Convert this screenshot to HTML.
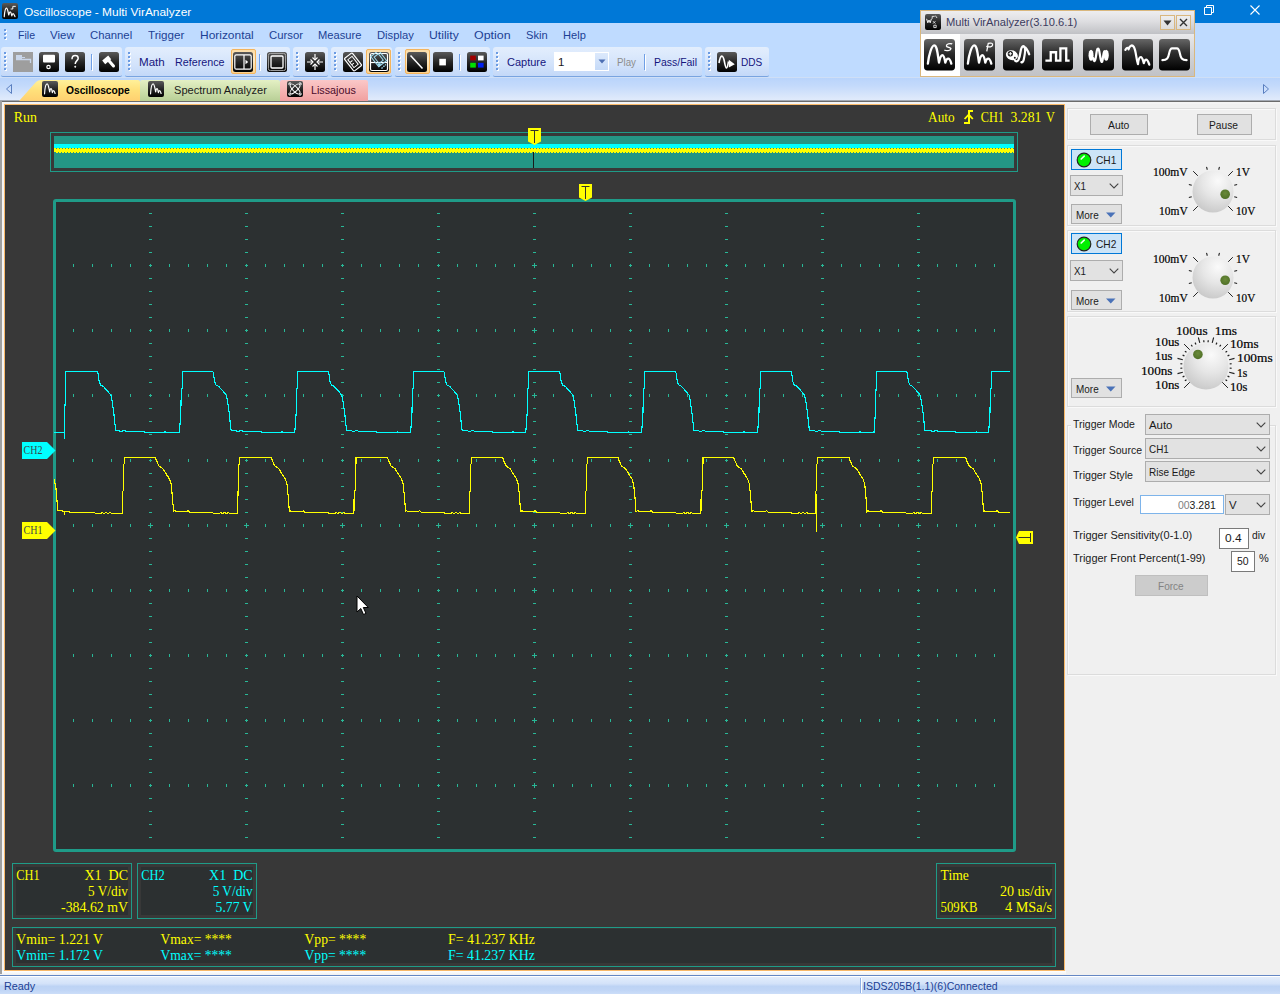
<!DOCTYPE html><html><head><meta charset="utf-8"><title>Oscilloscope - Multi VirAnalyzer</title><style>

html,body{margin:0;padding:0}
body{width:1280px;height:994px;position:relative;overflow:hidden;background:#f0f0f0;font-family:"Liberation Sans",sans-serif}
div,span.t,svg{position:absolute}
span.t{white-space:pre;display:block}
span.sf{font-family:"Liberation Serif",serif}
.tbp{background:linear-gradient(#e3eefd,#d3e3fb 60%,#c3d8f8);border-radius:3px 3px 2px 2px;border-bottom:1px solid #79a4e0;box-sizing:border-box}
.chk{background:linear-gradient(#fbdba5,#fdebc8 40%,#fbd28f);border:1px solid #f4b45c;border-radius:2px;box-sizing:border-box}
.cb{background:#e2e2e2;border:1px solid #adadad;box-sizing:border-box}
.btn{background:#e1e1e1;border:1px solid #adadad;box-sizing:border-box}
.btn.dis{background:#cccccc;border-color:#bfbfbf}
.grp{border:1px solid #dcdcdc;box-sizing:border-box;box-shadow:1px 1px 0 #f9f9f9, inset 1px 1px 0 #f9f9f9}

</style></head><body>
<svg width="0" height="0" style="position:absolute"><defs>
<linearGradient id="ig" x1="0" y1="0" x2="0" y2="1"><stop offset="0" stop-color="#5a5a5a"/><stop offset="0.5" stop-color="#262626"/><stop offset="1" stop-color="#000"/></linearGradient>
<radialGradient id="kg" cx="0.62" cy="0.25" r="0.85"><stop offset="0" stop-color="#fafafa"/><stop offset="0.45" stop-color="#e6e6e6"/><stop offset="1" stop-color="#c4c4c4"/></radialGradient>
<radialGradient id="dg" cx="0.5" cy="0.4" r="0.6"><stop offset="0" stop-color="#6a8a3a"/><stop offset="1" stop-color="#4f7026"/></radialGradient>
<linearGradient id="ig2" x1="0" y1="0" x2="0" y2="1"><stop offset="0" stop-color="#666"/><stop offset="0.45" stop-color="#2c2c2c"/><stop offset="1" stop-color="#000"/></linearGradient>
</defs></svg>
<div style="left:0px;top:0px;width:1280px;height:23px;background:#0078d7;"></div>
<svg style="position:absolute;left:2px;top:3px" width="16" height="16" viewBox="0 0 20 20"><rect x="0" y="0" width="20" height="20" rx="2.5" fill="url(#ig)"/><path d="M2.800 17C3.200 12 4.300 6.500 5.600 6.500C7 6.500 7.500 11 8.500 15C9 12.500 9.600 11.200 10.400 11.200C11.300 11.200 11.700 13.500 12.300 16C12.700 14 13.200 13.200 13.900 13.200C14.800 13.200 15.400 15 16.200 17" stroke="#fff" stroke-width="1.500" fill="none" stroke-linecap="round" stroke-linejoin="round"/><path d="M10.800 7.500H13.500V4.200H17.200" stroke="#fff" stroke-width="1.200" fill="none"/></svg>
<span class="t" style="left:23.90px;top:5px;font-size:11.6px;line-height:14px;color:#fff;transform:scaleX(1.0272);transform-origin:0 0;">Oscilloscope - Multi VirAnalyzer</span>
<svg style="position:absolute;left:1200px;top:2px" width="20" height="18" viewBox="0 0 20 18"><path d="M4.5 5.5H11.5V12.5H4.5ZM6.5 5.5V3.5H13.5V10.5H11.5" stroke="#fff" stroke-width="1" fill="none"/></svg>
<svg style="position:absolute;left:1246px;top:2px" width="20" height="18" viewBox="0 0 20 18"><path d="M4.5 3.5L13.5 12.5M13.5 3.5L4.5 12.5" stroke="#fff" stroke-width="1.1" fill="none"/></svg>
<div style="left:0px;top:23px;width:1280px;height:78px;background:#bfdbff;"></div>
<div style="left:5px;top:30px;width:2px;height:2px;background:#fff;"></div><div style="left:4px;top:29px;width:2px;height:2px;background:#6a9be3;"></div><div style="left:5px;top:34px;width:2px;height:2px;background:#fff;"></div><div style="left:4px;top:33px;width:2px;height:2px;background:#6a9be3;"></div><div style="left:5px;top:38px;width:2px;height:2px;background:#fff;"></div><div style="left:4px;top:37px;width:2px;height:2px;background:#6a9be3;"></div>
<span class="t" style="left:17.60px;top:28px;font-size:11.4px;line-height:14px;color:#1c3f94;transform:scaleX(0.9262);transform-origin:0 0;">File</span>
<span class="t" style="left:50.20px;top:28px;font-size:11.4px;line-height:14px;color:#1c3f94;transform:scaleX(1.0118);transform-origin:0 0;">View</span>
<span class="t" style="left:90.40px;top:28px;font-size:11.4px;line-height:14px;color:#1c3f94;transform:scaleX(0.9938);transform-origin:0 0;">Channel</span>
<span class="t" style="left:147.60px;top:28px;font-size:11.4px;line-height:14px;color:#1c3f94;transform:scaleX(1.0201);transform-origin:0 0;">Trigger</span>
<span class="t" style="left:200.20px;top:28px;font-size:11.4px;line-height:14px;color:#1c3f94;transform:scaleX(1.0487);transform-origin:0 0;">Horizontal</span>
<span class="t" style="left:269.00px;top:28px;font-size:11.4px;line-height:14px;color:#1c3f94;transform:scaleX(0.9942);transform-origin:0 0;">Cursor</span>
<span class="t" style="left:318.20px;top:28px;font-size:11.4px;line-height:14px;color:#1c3f94;transform:scaleX(0.9787);transform-origin:0 0;">Measure</span>
<span class="t" style="left:377.20px;top:28px;font-size:11.4px;line-height:14px;color:#1c3f94;transform:scaleX(0.9842);transform-origin:0 0;">Display</span>
<span class="t" style="left:429.20px;top:28px;font-size:11.4px;line-height:14px;color:#1c3f94;transform:scaleX(1.0691);transform-origin:0 0;">Utility</span>
<span class="t" style="left:474.00px;top:28px;font-size:11.4px;line-height:14px;color:#1c3f94;transform:scaleX(1.0902);transform-origin:0 0;">Option</span>
<span class="t" style="left:526.00px;top:28px;font-size:11.4px;line-height:14px;color:#1c3f94;transform:scaleX(0.9742);transform-origin:0 0;">Skin</span>
<span class="t" style="left:563.20px;top:28px;font-size:11.4px;line-height:14px;color:#1c3f94;transform:scaleX(0.9732);transform-origin:0 0;">Help</span>
<div class="tbp" style="left:1px;top:47px;width:121px;height:30px;"></div>
<div style="left:5px;top:53px;width:2px;height:2px;background:#fff;"></div><div style="left:4px;top:52px;width:2px;height:2px;background:#6a9be3;"></div><div style="left:5px;top:57px;width:2px;height:2px;background:#fff;"></div><div style="left:4px;top:56px;width:2px;height:2px;background:#6a9be3;"></div><div style="left:5px;top:61px;width:2px;height:2px;background:#fff;"></div><div style="left:4px;top:60px;width:2px;height:2px;background:#6a9be3;"></div><div style="left:5px;top:65px;width:2px;height:2px;background:#fff;"></div><div style="left:4px;top:64px;width:2px;height:2px;background:#6a9be3;"></div><div style="left:5px;top:69px;width:2px;height:2px;background:#fff;"></div><div style="left:4px;top:68px;width:2px;height:2px;background:#6a9be3;"></div>
<svg style="position:absolute;left:13px;top:52px" width="20" height="20" viewBox="0 0 20 20"><rect x="0" y="0" width="20" height="20" fill="#9e9e9e"/><path d="M3 3H9V7H3Z" fill="#c9d6ea"/><path d="M3 7.5H17.5V11" stroke="#c9d6ea" stroke-width="1.3" fill="none"/><path d="M9 5.5H12" stroke="#c9d6ea" stroke-width="1"/></svg>
<svg style="position:absolute;left:39px;top:52px" width="20" height="20" viewBox="0 0 20 20"><rect x="0" y="0" width="20" height="20" rx="2.5" fill="url(#ig)"/><rect x="4" y="2.8" width="12" height="7.6" rx="1" fill="#fff"/><circle cx="9.5" cy="15" r="1.7" fill="none" stroke="#fff" stroke-width="1.2"/></svg>
<svg style="position:absolute;left:65px;top:52px" width="20" height="20" viewBox="0 0 20 20"><rect x="0" y="0" width="20" height="20" rx="2.5" fill="url(#ig)"/><path d="M7 7.2C7 4.6 8.6 3.6 10.2 3.6C12 3.6 13.2 4.8 13.2 6.3C13.2 8.6 10.2 8.8 10.2 12" stroke="#fff" stroke-width="1.5" fill="none"/><path d="M10.2 13.5l1.1 1.3l-1.1 1.3l-1.1-1.3z" fill="#fff"/></svg>
<div style="left:91px;top:54px;width:1px;height:16px;background:#6f9fe6;"></div><div style="left:92px;top:55px;width:1px;height:16px;background:#fff;"></div>
<svg style="position:absolute;left:99px;top:52px" width="20" height="20" viewBox="0 0 20 20"><rect x="0" y="0" width="20" height="20" rx="2.5" fill="url(#ig)"/><path d="M3.2 8.6L9.2 3.6L12.2 7.2L6.2 12.2Z" fill="#fff"/><path d="M9.5 8.2L14.5 14" stroke="#fff" stroke-width="3" stroke-linecap="round"/></svg>
<div class="tbp" style="left:125px;top:47px;width:165px;height:30px;"></div>
<div style="left:129px;top:53px;width:2px;height:2px;background:#fff;"></div><div style="left:128px;top:52px;width:2px;height:2px;background:#6a9be3;"></div><div style="left:129px;top:57px;width:2px;height:2px;background:#fff;"></div><div style="left:128px;top:56px;width:2px;height:2px;background:#6a9be3;"></div><div style="left:129px;top:61px;width:2px;height:2px;background:#fff;"></div><div style="left:128px;top:60px;width:2px;height:2px;background:#6a9be3;"></div><div style="left:129px;top:65px;width:2px;height:2px;background:#fff;"></div><div style="left:128px;top:64px;width:2px;height:2px;background:#6a9be3;"></div><div style="left:129px;top:69px;width:2px;height:2px;background:#fff;"></div><div style="left:128px;top:68px;width:2px;height:2px;background:#6a9be3;"></div>
<span class="t" style="left:138.60px;top:55px;font-size:11.4px;line-height:14px;color:#15157e;transform:scaleX(1.0171);transform-origin:0 0;">Math</span>
<span class="t" style="left:174.80px;top:55px;font-size:11.4px;line-height:14px;color:#15157e;transform:scaleX(0.9428);transform-origin:0 0;">Reference</span>
<div class="chk" style="left:231px;top:49px;width:25px;height:25px;"></div>
<svg style="position:absolute;left:233px;top:52px" width="20" height="20" viewBox="0 0 20 20"><rect x="0" y="0" width="20" height="20" rx="2.5" fill="url(#ig)"/><rect x="1.8" y="2.8" width="16.4" height="14.4" rx="1.5" fill="none" stroke="#fff" stroke-width="1.2"/><path d="M11 3V17" stroke="#fff" stroke-width="1.2"/><path d="M12.5 7.8L15.2 10L12.5 12.2Z" fill="#fff"/></svg>
<div style="left:259px;top:54px;width:1px;height:16px;background:#6f9fe6;"></div><div style="left:260px;top:55px;width:1px;height:16px;background:#fff;"></div>
<svg style="position:absolute;left:267px;top:52px" width="20" height="20" viewBox="0 0 20 20"><rect x="0" y="0" width="20" height="20" rx="2.5" fill="url(#ig)"/><rect x="1.4" y="1.4" width="17.2" height="17.2" rx="2" fill="none" stroke="#aaa" stroke-width="1"/><rect x="4" y="4" width="12" height="12" rx="1" fill="none" stroke="#fff" stroke-width="1.3"/></svg>
<div class="tbp" style="left:293px;top:47px;width:35px;height:30px;"></div>
<div style="left:297px;top:53px;width:2px;height:2px;background:#fff;"></div><div style="left:296px;top:52px;width:2px;height:2px;background:#6a9be3;"></div><div style="left:297px;top:57px;width:2px;height:2px;background:#fff;"></div><div style="left:296px;top:56px;width:2px;height:2px;background:#6a9be3;"></div><div style="left:297px;top:61px;width:2px;height:2px;background:#fff;"></div><div style="left:296px;top:60px;width:2px;height:2px;background:#6a9be3;"></div><div style="left:297px;top:65px;width:2px;height:2px;background:#fff;"></div><div style="left:296px;top:64px;width:2px;height:2px;background:#6a9be3;"></div><div style="left:297px;top:69px;width:2px;height:2px;background:#fff;"></div><div style="left:296px;top:68px;width:2px;height:2px;background:#6a9be3;"></div>
<svg style="position:absolute;left:305px;top:52px" width="20" height="20" viewBox="0 0 20 20"><rect x="0" y="0" width="20" height="20" rx="2.5" fill="url(#ig)"/><path d="M2 10H8M12 10H18M10 2V8M10 12V18" stroke="#fff" stroke-width="1.2"/><path d="M5.5 7.5L8 10L5.5 12.5M14.5 7.5L12 10L14.5 12.5M7.5 5.5L10 8L12.5 5.5M7.5 14.5L10 12L12.5 14.5" stroke="#fff" stroke-width="1.1" fill="none"/></svg>
<div class="tbp" style="left:331px;top:47px;width:61px;height:30px;"></div>
<div style="left:335px;top:53px;width:2px;height:2px;background:#fff;"></div><div style="left:334px;top:52px;width:2px;height:2px;background:#6a9be3;"></div><div style="left:335px;top:57px;width:2px;height:2px;background:#fff;"></div><div style="left:334px;top:56px;width:2px;height:2px;background:#6a9be3;"></div><div style="left:335px;top:61px;width:2px;height:2px;background:#fff;"></div><div style="left:334px;top:60px;width:2px;height:2px;background:#6a9be3;"></div><div style="left:335px;top:65px;width:2px;height:2px;background:#fff;"></div><div style="left:334px;top:64px;width:2px;height:2px;background:#6a9be3;"></div><div style="left:335px;top:69px;width:2px;height:2px;background:#fff;"></div><div style="left:334px;top:68px;width:2px;height:2px;background:#6a9be3;"></div>
<svg style="position:absolute;left:343px;top:52px" width="20" height="20" viewBox="0 0 20 20"><rect x="0" y="0" width="20" height="20" rx="2.5" fill="url(#ig)"/><g transform="rotate(-38 10 10)"><rect x="5" y="2" width="10" height="16" rx="1.2" fill="none" stroke="#fff" stroke-width="1.2"/><rect x="7.3" y="5" width="5.4" height="10" fill="none" stroke="#fff" stroke-width="1"/><path d="M7.5 8.5H10.500M7.5 11.500H10" stroke="#fff" stroke-width="1"/></g></svg>
<div class="chk" style="left:366px;top:49px;width:25px;height:25px;"></div>
<svg style="position:absolute;left:369px;top:52px" width="20" height="20" viewBox="0 0 20 20"><rect x="0" y="0" width="20" height="20" rx="2.5" fill="url(#ig)"/><rect x="1.5" y="1.5" width="17" height="17" rx="1.5" fill="none" stroke="#fff" stroke-width="1.2"/><path d="M2 10.5H18" stroke="#fff" stroke-width="1.2"/><g transform="rotate(-38 10 7)" stroke="#9fdcf0" fill="none" stroke-width="1"><rect x="5" y="0" width="10" height="13"/><rect x="7.3" y="2.5" width="5.4" height="8"/></g><path d="M8 11.5H12.500L10.200 15Z" fill="#9fdcf0"/><path d="M12.500 16.500L17 12.500" stroke="#9fdcf0" stroke-width="1.4" stroke-dasharray="1.5 1"/></svg>
<div class="tbp" style="left:395px;top:47px;width:95px;height:30px;"></div>
<div style="left:399px;top:53px;width:2px;height:2px;background:#fff;"></div><div style="left:398px;top:52px;width:2px;height:2px;background:#6a9be3;"></div><div style="left:399px;top:57px;width:2px;height:2px;background:#fff;"></div><div style="left:398px;top:56px;width:2px;height:2px;background:#6a9be3;"></div><div style="left:399px;top:61px;width:2px;height:2px;background:#fff;"></div><div style="left:398px;top:60px;width:2px;height:2px;background:#6a9be3;"></div><div style="left:399px;top:65px;width:2px;height:2px;background:#fff;"></div><div style="left:398px;top:64px;width:2px;height:2px;background:#6a9be3;"></div><div style="left:399px;top:69px;width:2px;height:2px;background:#fff;"></div><div style="left:398px;top:68px;width:2px;height:2px;background:#6a9be3;"></div>
<div class="chk" style="left:405px;top:49px;width:25px;height:25px;"></div>
<svg style="position:absolute;left:407px;top:52px" width="20" height="20" viewBox="0 0 20 20"><rect x="0" y="0" width="20" height="20" rx="2.5" fill="url(#ig)"/><path d="M3.5 3.5L15.5 16.5" stroke="#fff" stroke-width="1.5"/></svg>
<svg style="position:absolute;left:433px;top:52px" width="20" height="20" viewBox="0 0 20 20"><rect x="0" y="0" width="20" height="20" rx="2.5" fill="url(#ig)"/><rect x="6.3" y="6.8" width="6.6" height="6.6" fill="#fff"/></svg>
<div style="left:459px;top:54px;width:1px;height:16px;background:#6f9fe6;"></div><div style="left:460px;top:55px;width:1px;height:16px;background:#fff;"></div>
<svg style="position:absolute;left:467px;top:52px" width="20" height="20" viewBox="0 0 20 20"><rect x="0" y="0" width="20" height="20" rx="2.5" fill="url(#ig)"/><rect x="3.2" y="3.6" width="5.6" height="4.8" fill="#a00000"/><rect x="11" y="3.6" width="5.6" height="4.8" fill="#fff"/><rect x="3.2" y="10.8" width="5.6" height="4.8" fill="#00e000"/><rect x="11" y="10.8" width="5.6" height="4.8" fill="#0020f0"/></svg>
<div class="tbp" style="left:493px;top:47px;width:209px;height:30px;"></div>
<div style="left:497px;top:53px;width:2px;height:2px;background:#fff;"></div><div style="left:496px;top:52px;width:2px;height:2px;background:#6a9be3;"></div><div style="left:497px;top:57px;width:2px;height:2px;background:#fff;"></div><div style="left:496px;top:56px;width:2px;height:2px;background:#6a9be3;"></div><div style="left:497px;top:61px;width:2px;height:2px;background:#fff;"></div><div style="left:496px;top:60px;width:2px;height:2px;background:#6a9be3;"></div><div style="left:497px;top:65px;width:2px;height:2px;background:#fff;"></div><div style="left:496px;top:64px;width:2px;height:2px;background:#6a9be3;"></div><div style="left:497px;top:69px;width:2px;height:2px;background:#fff;"></div><div style="left:496px;top:68px;width:2px;height:2px;background:#6a9be3;"></div>
<span class="t" style="left:507.00px;top:55px;font-size:11.4px;line-height:14px;color:#15157e;transform:scaleX(0.9659);transform-origin:0 0;">Capture</span>
<div style="left:554px;top:52px;width:55px;height:19px;background:#fff;"></div>
<div style="left:595px;top:53px;width:13px;height:17px;background:linear-gradient(#dce9fc,#c5daf8);"></div>
<svg style="position:absolute;left:598px;top:59px" width="8" height="5"><path d="M0.5 0.5H7.5L4 4.5Z" fill="#4d6fb3"/></svg>
<span class="t" style="left:558.00px;top:55px;font-size:11.4px;line-height:14px;color:#1a1a1a;">1</span>
<span class="t" style="left:616.60px;top:55px;font-size:11.4px;line-height:14px;color:#8d8d8d;transform:scaleX(0.8569);transform-origin:0 0;">Play</span>
<div style="left:644px;top:54px;width:1px;height:16px;background:#6f9fe6;"></div><div style="left:645px;top:55px;width:1px;height:16px;background:#fff;"></div>
<span class="t" style="left:653.60px;top:55px;font-size:11.4px;line-height:14px;color:#15157e;transform:scaleX(0.9177);transform-origin:0 0;">Pass/Fail</span>
<div class="tbp" style="left:705px;top:47px;width:64px;height:30px;"></div>
<div style="left:709px;top:53px;width:2px;height:2px;background:#fff;"></div><div style="left:708px;top:52px;width:2px;height:2px;background:#6a9be3;"></div><div style="left:709px;top:57px;width:2px;height:2px;background:#fff;"></div><div style="left:708px;top:56px;width:2px;height:2px;background:#6a9be3;"></div><div style="left:709px;top:61px;width:2px;height:2px;background:#fff;"></div><div style="left:708px;top:60px;width:2px;height:2px;background:#6a9be3;"></div><div style="left:709px;top:65px;width:2px;height:2px;background:#fff;"></div><div style="left:708px;top:64px;width:2px;height:2px;background:#6a9be3;"></div><div style="left:709px;top:69px;width:2px;height:2px;background:#fff;"></div><div style="left:708px;top:68px;width:2px;height:2px;background:#6a9be3;"></div>
<svg style="position:absolute;left:717px;top:52px" width="20" height="20" viewBox="0 0 20 20"><rect x="0" y="0" width="20" height="20" rx="2.5" fill="url(#ig)"/><path d="M2 11C3.5 2 6 2 7.5 10S10 18 11.5 9.5" stroke="#fff" stroke-width="1.6" fill="none"/><path d="M11.8 7.8L17.8 12.2L11.8 15.6Z" fill="#fff"/></svg>
<span class="t" style="left:740.80px;top:55px;font-size:11.4px;line-height:14px;color:#15157e;transform:scaleX(0.8814);transform-origin:0 0;">DDS</span>
<div style="left:0px;top:77px;width:1280px;height:1px;background:#cfdff6;"></div>
<div style="left:0px;top:78px;width:1280px;height:23px;background:linear-gradient(#b9d4fb,#c4dafb 35%,#dce8fb 85%,#e2ecfc);"></div>
<div style="left:0px;top:100px;width:1280px;height:1px;background:#a3a9b3;"></div>
<svg style="position:absolute;left:4px;top:82px" width="10" height="14"><path d="M7.5 2.5L2.5 7L7.5 11.5Z" fill="none" stroke="#5a7fc0" stroke-width="1"/></svg>
<svg style="position:absolute;left:1260px;top:82px" width="10" height="14"><path d="M3.5 2.5L8.5 7L3.5 11.5Z" fill="none" stroke="#5a7fc0" stroke-width="1"/></svg>
<svg style="position:absolute;left:18px;top:79px" width="352" height="22" viewBox="18 79 352 22"><defs><linearGradient id="ty" x1="0" y1="0" x2="0" y2="1"><stop offset="0" stop-color="#fff09a"/><stop offset="0.5" stop-color="#ffe07a"/><stop offset="1" stop-color="#ffd070"/></linearGradient><linearGradient id="tg" x1="0" y1="0" x2="0" y2="1"><stop offset="0" stop-color="#e4f0c4"/><stop offset="1" stop-color="#b8cf96"/></linearGradient><linearGradient id="tp" x1="0" y1="0" x2="0" y2="1"><stop offset="0" stop-color="#fbc8c8"/><stop offset="1" stop-color="#f0a0a0"/></linearGradient></defs><path d="M280 101V82Q280 80 282 80H366Q368 80 368 82V101Z" fill="url(#tp)"/><path d="M140 101V82Q140 80 142 80H278Q280 80 280 82V101Z" fill="url(#tg)"/><path d="M19 101L36 82Q38 80 41 80H138Q140 80 140 82V101Z" fill="url(#ty)"/></svg>
<svg style="position:absolute;left:42px;top:81px" width="16" height="16" viewBox="0 0 20 20"><rect x="0" y="0" width="20" height="20" rx="2.5" fill="url(#ig)"/><path d="M3.2 16C3.6 9 5 3.6 6.4 3.6C8 3.6 8.6 9 9.6 13.6C10 10.5 10.6 9.6 11.3 9.6C12.2 9.6 12.5 12 13 14.6C13.4 12.6 13.8 12 14.4 12C15.3 12 15.8 13.6 16.4 15.6" stroke="#fff" stroke-width="1.5" fill="none" stroke-linecap="round" stroke-linejoin="round"/></svg>
<svg style="position:absolute;left:148px;top:81px" width="16" height="16" viewBox="0 0 20 20"><rect x="0" y="0" width="20" height="20" rx="2.5" fill="url(#ig)"/><path d="M3.2 16C3.6 9 5 3.6 6.4 3.6C8 3.6 8.6 9 9.6 13.6C10 10.5 10.6 9.6 11.3 9.6C12.2 9.6 12.5 12 13 14.6C13.4 12.6 13.8 12 14.4 12C15.3 12 15.8 13.6 16.4 15.6" stroke="#fff" stroke-width="1.5" fill="none" stroke-linecap="round" stroke-linejoin="round"/></svg>
<svg style="position:absolute;left:287px;top:81px" width="16" height="16" viewBox="0 0 20 20"><rect x="0" y="0" width="20" height="20" rx="2.5" fill="url(#ig)"/><g stroke="#fff" stroke-width="1.2" fill="none"><ellipse cx="10" cy="10" rx="8.2" ry="3" transform="rotate(45 10 10)"/><ellipse cx="10" cy="10" rx="8.2" ry="3" transform="rotate(-45 10 10)"/></g><path d="M2.5 2.5H5M2.5 2.5V5M17.5 2.5H15M17.5 2.5V5M2.5 17.5H5M2.5 17.5V15M17.5 17.5H15M17.5 17.5V15" stroke="#fff" stroke-width="1.2"/></svg>
<span class="t" style="left:66.20px;top:83px;font-size:11.4px;line-height:14px;color:#000;font-weight:bold;transform:scaleX(0.8990);transform-origin:0 0;">Oscilloscope</span>
<span class="t" style="left:174.00px;top:83px;font-size:11.4px;line-height:14px;color:#1a1a1a;transform:scaleX(0.9718);transform-origin:0 0;">Spectrum Analyzer</span>
<span class="t" style="left:311.20px;top:83px;font-size:11.4px;line-height:14px;color:#4a0a2a;transform:scaleX(0.9424);transform-origin:0 0;">Lissajous</span>
<div style="left:0px;top:101px;width:1280px;height:1px;background:#6b6b6b;"></div>
<div style="left:0px;top:102px;width:1280px;height:2px;background:#f4f4f4;"></div>
<div style="left:0px;top:101px;width:2px;height:873px;background:#a0a0a0;"></div>
<div style="left:2px;top:102px;width:2px;height:873px;background:#f4f4f4;"></div>
<div style="left:4px;top:104px;width:1061px;height:867px;background:#f8b868;"></div>
<div style="left:2px;top:971px;width:1064px;height:4px;background:linear-gradient(#fff,#f0f0f0);"></div>
<div style="left:1066px;top:973px;width:214px;height:2px;background:#fafafa;"></div>
<div style="left:0px;top:975px;width:1280px;height:1px;background:#6487c4;"></div>
<div style="left:0px;top:976px;width:1280px;height:1px;background:#fff;"></div>
<div style="left:0px;top:977px;width:1280px;height:17px;background:linear-gradient(#e3edfb,#d3e2f9 40%,#bdd3f4 55%,#c1d6f6 80%,#cbddf8);"></div>
<div style="left:860px;top:978px;width:1px;height:15px;background:#8fb0e6;"></div>
<div style="left:861px;top:978px;width:1px;height:15px;background:#fff;"></div>
<span class="t" style="left:4.20px;top:979px;font-size:11.4px;line-height:14px;color:#1c3f94;transform:scaleX(0.9500);transform-origin:0 0;">Ready</span>
<span class="t" style="left:863.30px;top:979px;font-size:11.4px;line-height:14px;color:#1c3f94;transform:scaleX(0.9242);transform-origin:0 0;">ISDS205B(1.1)(6)Connected</span>
<div style="left:1066px;top:104px;width:214px;height:871px;background:#f0f0f0;"></div>
<div class="grp" style="left:1067px;top:108px;width:209px;height:32px;"></div>
<div class="btn" style="left:1090px;top:114px;width:58px;height:21px;"></div>
<span class="t" style="left:1108.00px;top:118px;font-size:11.4px;line-height:14px;color:#1a1a1a;transform:scaleX(0.9092);transform-origin:0 0;">Auto</span>
<div class="btn" style="left:1197px;top:114px;width:55px;height:21px;"></div>
<span class="t" style="left:1209.20px;top:118px;font-size:11.4px;line-height:14px;color:#1a1a1a;transform:scaleX(0.8973);transform-origin:0 0;">Pause</span>
<div class="grp" style="left:1067px;top:145px;width:209px;height:81px;"></div>
<div style="left:1071px;top:149px;width:51px;height:21px;background:#cce4f7;border:1px solid #0078d7;box-sizing:border-box;"></div>
<svg style="position:absolute;left:1075.5px;top:151.5px" width="16" height="16" viewBox="0 0 16 16"><circle cx="8" cy="8" r="6.800" fill="#00f000" stroke="#222" stroke-width="1.200"/><path d="M5.200 7L8.200 4.200" stroke="#eaffea" stroke-width="1.700" stroke-linecap="round"/></svg>
<span class="t" style="left:1095.80px;top:153px;font-size:11.4px;line-height:14px;color:#1a1a1a;transform:scaleX(0.8947);transform-origin:0 0;">CH1</span>
<div class="cb" style="left:1070px;top:175px;width:53px;height:21px;"></div><span class="t" style="left:1073.80px;top:179px;font-size:11.4px;line-height:14px;color:#1a1a1a;transform:scaleX(0.8593);transform-origin:0 0;">X1</span><svg style="position:absolute;left:1108.8px;top:182.6px" width="10" height="6"><path d="M0.700 0.700L5 5L9.300 0.700" stroke="#444" stroke-width="1.100" fill="none"/></svg>
<div class="btn" style="left:1071px;top:204px;width:51px;height:20px;"></div><span class="t" style="left:1075.50px;top:208px;font-size:11.4px;line-height:14px;color:#1a1a1a;transform:scaleX(0.8733);transform-origin:0 0;">More</span><svg style="position:absolute;left:1106px;top:212px" width="10" height="6"><path d="M0 0.500H9.500L4.750 5.500Z" fill="#4a72b8"/></svg>
<svg style="position:absolute;left:1172.5px;top:151.2px" width="80" height="80" viewBox="-40.0 -40.0 80 80"><ellipse cx="0" cy="0.5" rx="20.5" ry="21.1" fill="url(#kg)"/><path d="M-15.20 15.20L-19.80 19.80M-15.20 -15.20L-19.80 -19.80M15.20 -15.20L19.80 -19.80M15.20 15.20L19.80 19.80" stroke="#222" stroke-width="1" fill="none"/><path d="M-21.25 5.69L-24.15 6.47M-21.25 -5.69L-24.15 -6.47M-5.69 -21.25L-6.47 -24.15M5.69 -21.25L6.47 -24.15M21.25 -5.69L24.15 -6.47M21.25 5.69L24.15 6.47" stroke="#222" stroke-width="1.1" fill="none"/><circle cx="12.17" cy="3.26" r="4.800" fill="url(#dg)"/></svg>
<span class="t sf" style="left:1152.80px;top:165px;font-size:12px;line-height:14px;color:#000;transform:scaleX(0.9639);transform-origin:0 0;-webkit-text-stroke:0.2px #000;">100mV</span>
<span class="t sf" style="left:1235.80px;top:165px;font-size:12px;line-height:14px;color:#000;transform:scaleX(0.9426);transform-origin:0 0;-webkit-text-stroke:0.2px #000;">1V</span>
<span class="t sf" style="left:1158.80px;top:204px;font-size:12px;line-height:14px;color:#000;transform:scaleX(0.9567);transform-origin:0 0;-webkit-text-stroke:0.2px #000;">10mV</span>
<span class="t sf" style="left:1235.80px;top:204px;font-size:12px;line-height:14px;color:#000;transform:scaleX(0.9302);transform-origin:0 0;-webkit-text-stroke:0.2px #000;">10V</span>
<div class="grp" style="left:1067px;top:230px;width:209px;height:82px;"></div>
<div style="left:1071px;top:233px;width:51px;height:21px;background:#cce4f7;border:1px solid #0078d7;box-sizing:border-box;"></div>
<svg style="position:absolute;left:1075.5px;top:235.5px" width="16" height="16" viewBox="0 0 16 16"><circle cx="8" cy="8" r="6.800" fill="#00f000" stroke="#222" stroke-width="1.200"/><path d="M5.200 7L8.200 4.200" stroke="#eaffea" stroke-width="1.700" stroke-linecap="round"/></svg>
<span class="t" style="left:1095.80px;top:237px;font-size:11.4px;line-height:14px;color:#1a1a1a;transform:scaleX(0.8947);transform-origin:0 0;">CH2</span>
<div class="cb" style="left:1070px;top:260px;width:53px;height:21px;"></div><span class="t" style="left:1073.80px;top:264px;font-size:11.4px;line-height:14px;color:#1a1a1a;transform:scaleX(0.8593);transform-origin:0 0;">X1</span><svg style="position:absolute;left:1108.8px;top:267.6px" width="10" height="6"><path d="M0.700 0.700L5 5L9.300 0.700" stroke="#444" stroke-width="1.100" fill="none"/></svg>
<div class="btn" style="left:1071px;top:290px;width:51px;height:20px;"></div><span class="t" style="left:1075.50px;top:294px;font-size:11.4px;line-height:14px;color:#1a1a1a;transform:scaleX(0.8733);transform-origin:0 0;">More</span><svg style="position:absolute;left:1106px;top:298px" width="10" height="6"><path d="M0 0.500H9.500L4.750 5.500Z" fill="#4a72b8"/></svg>
<svg style="position:absolute;left:1172.5px;top:237.39999999999998px" width="80" height="80" viewBox="-40.0 -40.0 80 80"><ellipse cx="0" cy="0.5" rx="20.5" ry="21.1" fill="url(#kg)"/><path d="M-15.20 15.20L-19.80 19.80M-15.20 -15.20L-19.80 -19.80M15.20 -15.20L19.80 -19.80M15.20 15.20L19.80 19.80" stroke="#222" stroke-width="1" fill="none"/><path d="M-21.25 5.69L-24.15 6.47M-21.25 -5.69L-24.15 -6.47M-5.69 -21.25L-6.47 -24.15M5.69 -21.25L6.47 -24.15M21.25 -5.69L24.15 -6.47M21.25 5.69L24.15 6.47" stroke="#222" stroke-width="1.1" fill="none"/><circle cx="12.17" cy="3.26" r="4.800" fill="url(#dg)"/></svg>
<span class="t sf" style="left:1152.80px;top:252px;font-size:12px;line-height:14px;color:#000;transform:scaleX(0.9639);transform-origin:0 0;-webkit-text-stroke:0.2px #000;">100mV</span>
<span class="t sf" style="left:1235.80px;top:252px;font-size:12px;line-height:14px;color:#000;transform:scaleX(0.9426);transform-origin:0 0;-webkit-text-stroke:0.2px #000;">1V</span>
<span class="t sf" style="left:1158.80px;top:291px;font-size:12px;line-height:14px;color:#000;transform:scaleX(0.9567);transform-origin:0 0;-webkit-text-stroke:0.2px #000;">10mV</span>
<span class="t sf" style="left:1235.80px;top:291px;font-size:12px;line-height:14px;color:#000;transform:scaleX(0.9302);transform-origin:0 0;-webkit-text-stroke:0.2px #000;">10V</span>
<div class="grp" style="left:1067px;top:316px;width:209px;height:91px;"></div>
<div class="btn" style="left:1071px;top:378px;width:51px;height:20px;"></div><span class="t" style="left:1075.50px;top:382px;font-size:11.4px;line-height:14px;color:#1a1a1a;transform:scaleX(0.8733);transform-origin:0 0;">More</span><svg style="position:absolute;left:1106px;top:386px" width="10" height="6"><path d="M0 0.500H9.500L4.750 5.500Z" fill="#4a72b8"/></svg>
<svg style="position:absolute;left:1166.0px;top:326.0px" width="80" height="80" viewBox="-40.0 -40.0 80 80"><ellipse cx="0" cy="0.5" rx="22.5" ry="23.1" fill="url(#kg)"/><path d="M-16.26 16.26L-21.92 21.92M-16.26 -16.26L-21.92 -21.92M16.26 -16.26L21.92 -21.92M16.26 16.26L21.92 21.92" stroke="#222" stroke-width="1" fill="none"/><path d="M-23.18 6.21L-28.49 7.64M-23.18 -6.21L-28.49 -7.64M-6.21 -23.18L-7.64 -28.49M6.21 -23.18L7.64 -28.49M23.18 -6.21L28.49 -7.64M23.18 6.21L28.49 7.64" stroke="#222" stroke-width="1.1" fill="none"/><path d="M-19.50 13.65L-21.13 14.80M-21.57 10.06L-23.38 10.90M-23.71 2.07L-25.70 2.25M-23.71 -2.07L-25.70 -2.25M-21.57 -10.06L-23.38 -10.90M-19.50 -13.65L-21.13 -14.80M-13.65 -19.50L-14.80 -21.13M-10.06 -21.57L-10.90 -23.38M-2.07 -23.71L-2.25 -25.70M2.07 -23.71L2.25 -25.70M10.06 -21.57L10.90 -23.38M13.65 -19.50L14.80 -21.13M19.50 -13.65L21.13 -14.80M21.57 -10.06L23.38 -10.90M23.71 -2.07L25.70 -2.25M23.71 2.07L25.70 2.25M21.57 10.06L23.38 10.90M19.50 13.65L21.13 14.80" stroke="#222" stroke-width="1.25" fill="none"/><circle cx="-8.09" cy="-11.55" r="4.800" fill="url(#dg)"/></svg>
<span class="t sf" style="left:1176.00px;top:323px;font-size:13.3px;line-height:16px;color:#000;transform:scaleX(0.9941);transform-origin:0 0;-webkit-text-stroke:0.2px #000;">100us</span>
<span class="t sf" style="left:1214.80px;top:323px;font-size:13.3px;line-height:16px;color:#000;-webkit-text-stroke:0.2px #000;">1ms</span>
<span class="t sf" style="left:1155.40px;top:334px;font-size:13.3px;line-height:16px;color:#000;transform:scaleX(0.9707);transform-origin:0 0;-webkit-text-stroke:0.2px #000;">10us</span>
<span class="t sf" style="left:1230.40px;top:336px;font-size:13.3px;line-height:16px;color:#000;transform:scaleX(0.9898);transform-origin:0 0;-webkit-text-stroke:0.2px #000;">10ms</span>
<span class="t sf" style="left:1155.40px;top:348px;font-size:13.3px;line-height:16px;color:#000;transform:scaleX(0.9412);transform-origin:0 0;-webkit-text-stroke:0.2px #000;">1us</span>
<span class="t sf" style="left:1237.40px;top:350px;font-size:13.3px;line-height:16px;color:#000;transform:scaleX(1.0044);transform-origin:0 0;-webkit-text-stroke:0.2px #000;">100ms</span>
<span class="t sf" style="left:1141.30px;top:363px;font-size:13.3px;line-height:16px;color:#000;transform:scaleX(0.9910);transform-origin:0 0;-webkit-text-stroke:0.2px #000;">100ns</span>
<span class="t sf" style="left:1237.40px;top:365px;font-size:13.3px;line-height:16px;color:#000;transform:scaleX(0.8786);transform-origin:0 0;-webkit-text-stroke:0.2px #000;">1s</span>
<span class="t sf" style="left:1155.40px;top:377px;font-size:13.3px;line-height:16px;color:#000;transform:scaleX(0.9707);transform-origin:0 0;-webkit-text-stroke:0.2px #000;">10ns</span>
<span class="t sf" style="left:1230.40px;top:379px;font-size:13.3px;line-height:16px;color:#000;transform:scaleX(0.9412);transform-origin:0 0;-webkit-text-stroke:0.2px #000;">10s</span>
<div class="grp" style="left:1067px;top:425px;width:209px;height:250px;"></div>
<div style="left:1071px;top:418px;width:76px;height:14px;background:#f0f0f0;"></div>
<span class="t" style="left:1073.00px;top:417px;font-size:11.4px;line-height:14px;color:#1a1a1a;transform:scaleX(0.9202);transform-origin:0 0;">Trigger Mode</span>
<div class="cb" style="left:1145px;top:414px;width:125px;height:21px;"></div><span class="t" style="left:1149.00px;top:418px;font-size:11.4px;line-height:14px;color:#1a1a1a;">Auto</span><svg style="position:absolute;left:1255.8px;top:421.6px" width="10" height="6"><path d="M0.700 0.700L5 5L9.300 0.700" stroke="#444" stroke-width="1.100" fill="none"/></svg>
<span class="t" style="left:1073.00px;top:443px;font-size:11.4px;line-height:14px;color:#1a1a1a;transform:scaleX(0.9206);transform-origin:0 0;">Trigger Source</span>
<div class="cb" style="left:1145px;top:438px;width:125px;height:21px;"></div><span class="t" style="left:1148.80px;top:442px;font-size:11.4px;line-height:14px;color:#1a1a1a;transform:scaleX(0.8684);transform-origin:0 0;">CH1</span><svg style="position:absolute;left:1255.8px;top:445.6px" width="10" height="6"><path d="M0.700 0.700L5 5L9.300 0.700" stroke="#444" stroke-width="1.100" fill="none"/></svg>
<span class="t" style="left:1073.00px;top:468px;font-size:11.4px;line-height:14px;color:#1a1a1a;transform:scaleX(0.9348);transform-origin:0 0;">Trigger Style</span>
<div class="cb" style="left:1145px;top:461px;width:125px;height:21px;"></div><span class="t" style="left:1148.80px;top:465px;font-size:11.4px;line-height:14px;color:#1a1a1a;transform:scaleX(0.8762);transform-origin:0 0;">Rise Edge</span><svg style="position:absolute;left:1255.8px;top:468.6px" width="10" height="6"><path d="M0.700 0.700L5 5L9.300 0.700" stroke="#444" stroke-width="1.100" fill="none"/></svg>
<span class="t" style="left:1073.00px;top:495px;font-size:11.4px;line-height:14px;color:#1a1a1a;transform:scaleX(0.9226);transform-origin:0 0;">Trigger Level</span>
<div style="left:1140px;top:495px;width:84px;height:19px;background:#fff;border:1px solid #7eb4ea;box-sizing:border-box;"></div>
<span class="t" style="left:1178.20px;top:498px;font-size:11.4px;line-height:14px;color:#1a1a1a;transform:scaleX(0.9172);transform-origin:0 0;"><span style="color:#808080">00</span>3.281</span>
<div class="cb" style="left:1225px;top:494px;width:45px;height:21px;"></div><span class="t" style="left:1229.00px;top:498px;font-size:11.4px;line-height:14px;color:#1a1a1a;">V</span><svg style="position:absolute;left:1255.8px;top:501.6px" width="10" height="6"><path d="M0.700 0.700L5 5L9.300 0.700" stroke="#444" stroke-width="1.100" fill="none"/></svg>
<span class="t" style="left:1073.00px;top:528px;font-size:11.4px;line-height:14px;color:#1a1a1a;transform:scaleX(0.9641);transform-origin:0 0;">Trigger Sensitivity(0-1.0)</span>
<div style="left:1219px;top:528px;width:30px;height:21px;background:#fff;border:1px solid #7a7a7a;box-sizing:border-box;"></div>
<span class="t" style="left:1224.70px;top:531px;font-size:11.4px;line-height:14px;color:#1a1a1a;transform:scaleX(1.0476);transform-origin:0 0;">0.4</span>
<span class="t" style="left:1251.80px;top:528px;font-size:11.4px;line-height:14px;color:#1a1a1a;transform:scaleX(0.9046);transform-origin:0 0;">div</span>
<span class="t" style="left:1073.00px;top:551px;font-size:11.4px;line-height:14px;color:#1a1a1a;transform:scaleX(0.9585);transform-origin:0 0;">Trigger Front Percent(1-99)</span>
<div style="left:1231px;top:551px;width:24px;height:21px;background:#fff;border:1px solid #7a7a7a;box-sizing:border-box;"></div>
<span class="t" style="left:1236.90px;top:554px;font-size:11.4px;line-height:14px;color:#1a1a1a;transform:scaleX(0.9167);transform-origin:0 0;">50</span>
<span class="t" style="left:1258.70px;top:551px;font-size:11.4px;line-height:14px;color:#1a1a1a;transform:scaleX(0.9659);transform-origin:0 0;">%</span>
<div class="btn dis" style="left:1135px;top:575px;width:73px;height:21px;"></div>
<span class="t" style="left:1158.40px;top:579px;font-size:11.4px;line-height:14px;color:#838383;transform:scaleX(0.8823);transform-origin:0 0;">Force</span>
<svg class="scope" width="1059" height="865" viewBox="5 105 1059 865" style="position:absolute;left:5px;top:105px" font-family="'Liberation Serif',serif">
<rect x="5" y="105" width="1059" height="865" fill="#383838"/>
<rect x="50.5" y="132.5" width="967" height="39" fill="none" stroke="#1f9b88" stroke-width="1" shape-rendering="crispEdges"/>
<rect x="54" y="136" width="960" height="32" fill="#249685" shape-rendering="crispEdges"/>
<rect x="54" y="144" width="960" height="4" fill="#00ffff" shape-rendering="crispEdges"/>
<rect x="54" y="149" width="960" height="3" fill="#ffff00" shape-rendering="crispEdges"/>
<path d="M54 148.5H1014M55.5 152.5H1014" stroke="#ffff00" stroke-width="1" stroke-dasharray="2 1" fill="none" shape-rendering="crispEdges"/>
<rect x="533" y="152" width="1" height="16" fill="#1a1a1a" shape-rendering="crispEdges"/>
<path d="M528.0 128H541.0V141.5L534.5 145L528.0 141.5Z" fill="#ffff00"/><path d="M530.5 130.5H538.5M534.5 130.5V143" stroke="#33332a" stroke-width="1" fill="none"/>
<rect x="54.5" y="200.5" width="960" height="650" rx="1.5" fill="#2c3031" stroke="#1f9b88" stroke-width="3"/>
<path d="M73 264h1v3h-1zM92 264h1v3h-1zM111 264h1v3h-1zM130 264h1v3h-1zM169 264h1v3h-1zM188 264h1v3h-1zM207 264h1v3h-1zM226 264h1v3h-1zM265 264h1v3h-1zM284 264h1v3h-1zM303 264h1v3h-1zM322 264h1v3h-1zM361 264h1v3h-1zM380 264h1v3h-1zM399 264h1v3h-1zM418 264h1v3h-1zM457 264h1v3h-1zM476 264h1v3h-1zM495 264h1v3h-1zM514 264h1v3h-1zM553 264h1v3h-1zM572 264h1v3h-1zM591 264h1v3h-1zM610 264h1v3h-1zM649 264h1v3h-1zM668 264h1v3h-1zM687 264h1v3h-1zM706 264h1v3h-1zM745 264h1v3h-1zM764 264h1v3h-1zM783 264h1v3h-1zM802 264h1v3h-1zM841 264h1v3h-1zM860 264h1v3h-1zM879 264h1v3h-1zM898 264h1v3h-1zM937 264h1v3h-1zM956 264h1v3h-1zM975 264h1v3h-1zM994 264h1v3h-1zM73 329h1v3h-1zM92 329h1v3h-1zM111 329h1v3h-1zM130 329h1v3h-1zM169 329h1v3h-1zM188 329h1v3h-1zM207 329h1v3h-1zM226 329h1v3h-1zM265 329h1v3h-1zM284 329h1v3h-1zM303 329h1v3h-1zM322 329h1v3h-1zM361 329h1v3h-1zM380 329h1v3h-1zM399 329h1v3h-1zM418 329h1v3h-1zM457 329h1v3h-1zM476 329h1v3h-1zM495 329h1v3h-1zM514 329h1v3h-1zM553 329h1v3h-1zM572 329h1v3h-1zM591 329h1v3h-1zM610 329h1v3h-1zM649 329h1v3h-1zM668 329h1v3h-1zM687 329h1v3h-1zM706 329h1v3h-1zM745 329h1v3h-1zM764 329h1v3h-1zM783 329h1v3h-1zM802 329h1v3h-1zM841 329h1v3h-1zM860 329h1v3h-1zM879 329h1v3h-1zM898 329h1v3h-1zM937 329h1v3h-1zM956 329h1v3h-1zM975 329h1v3h-1zM994 329h1v3h-1zM73 394h1v3h-1zM92 394h1v3h-1zM111 394h1v3h-1zM130 394h1v3h-1zM169 394h1v3h-1zM188 394h1v3h-1zM207 394h1v3h-1zM226 394h1v3h-1zM265 394h1v3h-1zM284 394h1v3h-1zM303 394h1v3h-1zM322 394h1v3h-1zM361 394h1v3h-1zM380 394h1v3h-1zM399 394h1v3h-1zM418 394h1v3h-1zM457 394h1v3h-1zM476 394h1v3h-1zM495 394h1v3h-1zM514 394h1v3h-1zM553 394h1v3h-1zM572 394h1v3h-1zM591 394h1v3h-1zM610 394h1v3h-1zM649 394h1v3h-1zM668 394h1v3h-1zM687 394h1v3h-1zM706 394h1v3h-1zM745 394h1v3h-1zM764 394h1v3h-1zM783 394h1v3h-1zM802 394h1v3h-1zM841 394h1v3h-1zM860 394h1v3h-1zM879 394h1v3h-1zM898 394h1v3h-1zM937 394h1v3h-1zM956 394h1v3h-1zM975 394h1v3h-1zM994 394h1v3h-1zM73 459h1v3h-1zM92 459h1v3h-1zM111 459h1v3h-1zM130 459h1v3h-1zM169 459h1v3h-1zM188 459h1v3h-1zM207 459h1v3h-1zM226 459h1v3h-1zM265 459h1v3h-1zM284 459h1v3h-1zM303 459h1v3h-1zM322 459h1v3h-1zM361 459h1v3h-1zM380 459h1v3h-1zM399 459h1v3h-1zM418 459h1v3h-1zM457 459h1v3h-1zM476 459h1v3h-1zM495 459h1v3h-1zM514 459h1v3h-1zM553 459h1v3h-1zM572 459h1v3h-1zM591 459h1v3h-1zM610 459h1v3h-1zM649 459h1v3h-1zM668 459h1v3h-1zM687 459h1v3h-1zM706 459h1v3h-1zM745 459h1v3h-1zM764 459h1v3h-1zM783 459h1v3h-1zM802 459h1v3h-1zM841 459h1v3h-1zM860 459h1v3h-1zM879 459h1v3h-1zM898 459h1v3h-1zM937 459h1v3h-1zM956 459h1v3h-1zM975 459h1v3h-1zM994 459h1v3h-1zM73 524h1v3h-1zM92 524h1v3h-1zM111 524h1v3h-1zM130 524h1v3h-1zM169 524h1v3h-1zM188 524h1v3h-1zM207 524h1v3h-1zM226 524h1v3h-1zM265 524h1v3h-1zM284 524h1v3h-1zM303 524h1v3h-1zM322 524h1v3h-1zM361 524h1v3h-1zM380 524h1v3h-1zM399 524h1v3h-1zM418 524h1v3h-1zM457 524h1v3h-1zM476 524h1v3h-1zM495 524h1v3h-1zM514 524h1v3h-1zM553 524h1v3h-1zM572 524h1v3h-1zM591 524h1v3h-1zM610 524h1v3h-1zM649 524h1v3h-1zM668 524h1v3h-1zM687 524h1v3h-1zM706 524h1v3h-1zM745 524h1v3h-1zM764 524h1v3h-1zM783 524h1v3h-1zM802 524h1v3h-1zM841 524h1v3h-1zM860 524h1v3h-1zM879 524h1v3h-1zM898 524h1v3h-1zM937 524h1v3h-1zM956 524h1v3h-1zM975 524h1v3h-1zM994 524h1v3h-1zM73 589h1v3h-1zM92 589h1v3h-1zM111 589h1v3h-1zM130 589h1v3h-1zM169 589h1v3h-1zM188 589h1v3h-1zM207 589h1v3h-1zM226 589h1v3h-1zM265 589h1v3h-1zM284 589h1v3h-1zM303 589h1v3h-1zM322 589h1v3h-1zM361 589h1v3h-1zM380 589h1v3h-1zM399 589h1v3h-1zM418 589h1v3h-1zM457 589h1v3h-1zM476 589h1v3h-1zM495 589h1v3h-1zM514 589h1v3h-1zM553 589h1v3h-1zM572 589h1v3h-1zM591 589h1v3h-1zM610 589h1v3h-1zM649 589h1v3h-1zM668 589h1v3h-1zM687 589h1v3h-1zM706 589h1v3h-1zM745 589h1v3h-1zM764 589h1v3h-1zM783 589h1v3h-1zM802 589h1v3h-1zM841 589h1v3h-1zM860 589h1v3h-1zM879 589h1v3h-1zM898 589h1v3h-1zM937 589h1v3h-1zM956 589h1v3h-1zM975 589h1v3h-1zM994 589h1v3h-1zM73 654h1v3h-1zM92 654h1v3h-1zM111 654h1v3h-1zM130 654h1v3h-1zM169 654h1v3h-1zM188 654h1v3h-1zM207 654h1v3h-1zM226 654h1v3h-1zM265 654h1v3h-1zM284 654h1v3h-1zM303 654h1v3h-1zM322 654h1v3h-1zM361 654h1v3h-1zM380 654h1v3h-1zM399 654h1v3h-1zM418 654h1v3h-1zM457 654h1v3h-1zM476 654h1v3h-1zM495 654h1v3h-1zM514 654h1v3h-1zM553 654h1v3h-1zM572 654h1v3h-1zM591 654h1v3h-1zM610 654h1v3h-1zM649 654h1v3h-1zM668 654h1v3h-1zM687 654h1v3h-1zM706 654h1v3h-1zM745 654h1v3h-1zM764 654h1v3h-1zM783 654h1v3h-1zM802 654h1v3h-1zM841 654h1v3h-1zM860 654h1v3h-1zM879 654h1v3h-1zM898 654h1v3h-1zM937 654h1v3h-1zM956 654h1v3h-1zM975 654h1v3h-1zM994 654h1v3h-1zM73 719h1v3h-1zM92 719h1v3h-1zM111 719h1v3h-1zM130 719h1v3h-1zM169 719h1v3h-1zM188 719h1v3h-1zM207 719h1v3h-1zM226 719h1v3h-1zM265 719h1v3h-1zM284 719h1v3h-1zM303 719h1v3h-1zM322 719h1v3h-1zM361 719h1v3h-1zM380 719h1v3h-1zM399 719h1v3h-1zM418 719h1v3h-1zM457 719h1v3h-1zM476 719h1v3h-1zM495 719h1v3h-1zM514 719h1v3h-1zM553 719h1v3h-1zM572 719h1v3h-1zM591 719h1v3h-1zM610 719h1v3h-1zM649 719h1v3h-1zM668 719h1v3h-1zM687 719h1v3h-1zM706 719h1v3h-1zM745 719h1v3h-1zM764 719h1v3h-1zM783 719h1v3h-1zM802 719h1v3h-1zM841 719h1v3h-1zM860 719h1v3h-1zM879 719h1v3h-1zM898 719h1v3h-1zM937 719h1v3h-1zM956 719h1v3h-1zM975 719h1v3h-1zM994 719h1v3h-1zM73 784h1v3h-1zM92 784h1v3h-1zM111 784h1v3h-1zM130 784h1v3h-1zM169 784h1v3h-1zM188 784h1v3h-1zM207 784h1v3h-1zM226 784h1v3h-1zM265 784h1v3h-1zM284 784h1v3h-1zM303 784h1v3h-1zM322 784h1v3h-1zM361 784h1v3h-1zM380 784h1v3h-1zM399 784h1v3h-1zM418 784h1v3h-1zM457 784h1v3h-1zM476 784h1v3h-1zM495 784h1v3h-1zM514 784h1v3h-1zM553 784h1v3h-1zM572 784h1v3h-1zM591 784h1v3h-1zM610 784h1v3h-1zM649 784h1v3h-1zM668 784h1v3h-1zM687 784h1v3h-1zM706 784h1v3h-1zM745 784h1v3h-1zM764 784h1v3h-1zM783 784h1v3h-1zM802 784h1v3h-1zM841 784h1v3h-1zM860 784h1v3h-1zM879 784h1v3h-1zM898 784h1v3h-1zM937 784h1v3h-1zM956 784h1v3h-1zM975 784h1v3h-1zM994 784h1v3h-1zM149 213h3v1h-3zM149 226h3v1h-3zM149 239h3v1h-3zM149 252h3v1h-3zM149 278h3v1h-3zM149 291h3v1h-3zM149 304h3v1h-3zM149 317h3v1h-3zM149 343h3v1h-3zM149 356h3v1h-3zM149 369h3v1h-3zM149 382h3v1h-3zM149 408h3v1h-3zM149 421h3v1h-3zM149 434h3v1h-3zM149 447h3v1h-3zM149 473h3v1h-3zM149 486h3v1h-3zM149 499h3v1h-3zM149 512h3v1h-3zM149 538h3v1h-3zM149 551h3v1h-3zM149 564h3v1h-3zM149 577h3v1h-3zM149 603h3v1h-3zM149 616h3v1h-3zM149 629h3v1h-3zM149 642h3v1h-3zM149 668h3v1h-3zM149 681h3v1h-3zM149 694h3v1h-3zM149 707h3v1h-3zM149 733h3v1h-3zM149 746h3v1h-3zM149 759h3v1h-3zM149 772h3v1h-3zM149 798h3v1h-3zM149 811h3v1h-3zM149 824h3v1h-3zM149 837h3v1h-3zM245 213h3v1h-3zM245 226h3v1h-3zM245 239h3v1h-3zM245 252h3v1h-3zM245 278h3v1h-3zM245 291h3v1h-3zM245 304h3v1h-3zM245 317h3v1h-3zM245 343h3v1h-3zM245 356h3v1h-3zM245 369h3v1h-3zM245 382h3v1h-3zM245 408h3v1h-3zM245 421h3v1h-3zM245 434h3v1h-3zM245 447h3v1h-3zM245 473h3v1h-3zM245 486h3v1h-3zM245 499h3v1h-3zM245 512h3v1h-3zM245 538h3v1h-3zM245 551h3v1h-3zM245 564h3v1h-3zM245 577h3v1h-3zM245 603h3v1h-3zM245 616h3v1h-3zM245 629h3v1h-3zM245 642h3v1h-3zM245 668h3v1h-3zM245 681h3v1h-3zM245 694h3v1h-3zM245 707h3v1h-3zM245 733h3v1h-3zM245 746h3v1h-3zM245 759h3v1h-3zM245 772h3v1h-3zM245 798h3v1h-3zM245 811h3v1h-3zM245 824h3v1h-3zM245 837h3v1h-3zM341 213h3v1h-3zM341 226h3v1h-3zM341 239h3v1h-3zM341 252h3v1h-3zM341 278h3v1h-3zM341 291h3v1h-3zM341 304h3v1h-3zM341 317h3v1h-3zM341 343h3v1h-3zM341 356h3v1h-3zM341 369h3v1h-3zM341 382h3v1h-3zM341 408h3v1h-3zM341 421h3v1h-3zM341 434h3v1h-3zM341 447h3v1h-3zM341 473h3v1h-3zM341 486h3v1h-3zM341 499h3v1h-3zM341 512h3v1h-3zM341 538h3v1h-3zM341 551h3v1h-3zM341 564h3v1h-3zM341 577h3v1h-3zM341 603h3v1h-3zM341 616h3v1h-3zM341 629h3v1h-3zM341 642h3v1h-3zM341 668h3v1h-3zM341 681h3v1h-3zM341 694h3v1h-3zM341 707h3v1h-3zM341 733h3v1h-3zM341 746h3v1h-3zM341 759h3v1h-3zM341 772h3v1h-3zM341 798h3v1h-3zM341 811h3v1h-3zM341 824h3v1h-3zM341 837h3v1h-3zM437 213h3v1h-3zM437 226h3v1h-3zM437 239h3v1h-3zM437 252h3v1h-3zM437 278h3v1h-3zM437 291h3v1h-3zM437 304h3v1h-3zM437 317h3v1h-3zM437 343h3v1h-3zM437 356h3v1h-3zM437 369h3v1h-3zM437 382h3v1h-3zM437 408h3v1h-3zM437 421h3v1h-3zM437 434h3v1h-3zM437 447h3v1h-3zM437 473h3v1h-3zM437 486h3v1h-3zM437 499h3v1h-3zM437 512h3v1h-3zM437 538h3v1h-3zM437 551h3v1h-3zM437 564h3v1h-3zM437 577h3v1h-3zM437 603h3v1h-3zM437 616h3v1h-3zM437 629h3v1h-3zM437 642h3v1h-3zM437 668h3v1h-3zM437 681h3v1h-3zM437 694h3v1h-3zM437 707h3v1h-3zM437 733h3v1h-3zM437 746h3v1h-3zM437 759h3v1h-3zM437 772h3v1h-3zM437 798h3v1h-3zM437 811h3v1h-3zM437 824h3v1h-3zM437 837h3v1h-3zM533 213h3v1h-3zM533 226h3v1h-3zM533 239h3v1h-3zM533 252h3v1h-3zM533 278h3v1h-3zM533 291h3v1h-3zM533 304h3v1h-3zM533 317h3v1h-3zM533 343h3v1h-3zM533 356h3v1h-3zM533 369h3v1h-3zM533 382h3v1h-3zM533 408h3v1h-3zM533 421h3v1h-3zM533 434h3v1h-3zM533 447h3v1h-3zM533 473h3v1h-3zM533 486h3v1h-3zM533 499h3v1h-3zM533 512h3v1h-3zM533 538h3v1h-3zM533 551h3v1h-3zM533 564h3v1h-3zM533 577h3v1h-3zM533 603h3v1h-3zM533 616h3v1h-3zM533 629h3v1h-3zM533 642h3v1h-3zM533 668h3v1h-3zM533 681h3v1h-3zM533 694h3v1h-3zM533 707h3v1h-3zM533 733h3v1h-3zM533 746h3v1h-3zM533 759h3v1h-3zM533 772h3v1h-3zM533 798h3v1h-3zM533 811h3v1h-3zM533 824h3v1h-3zM533 837h3v1h-3zM629 213h3v1h-3zM629 226h3v1h-3zM629 239h3v1h-3zM629 252h3v1h-3zM629 278h3v1h-3zM629 291h3v1h-3zM629 304h3v1h-3zM629 317h3v1h-3zM629 343h3v1h-3zM629 356h3v1h-3zM629 369h3v1h-3zM629 382h3v1h-3zM629 408h3v1h-3zM629 421h3v1h-3zM629 434h3v1h-3zM629 447h3v1h-3zM629 473h3v1h-3zM629 486h3v1h-3zM629 499h3v1h-3zM629 512h3v1h-3zM629 538h3v1h-3zM629 551h3v1h-3zM629 564h3v1h-3zM629 577h3v1h-3zM629 603h3v1h-3zM629 616h3v1h-3zM629 629h3v1h-3zM629 642h3v1h-3zM629 668h3v1h-3zM629 681h3v1h-3zM629 694h3v1h-3zM629 707h3v1h-3zM629 733h3v1h-3zM629 746h3v1h-3zM629 759h3v1h-3zM629 772h3v1h-3zM629 798h3v1h-3zM629 811h3v1h-3zM629 824h3v1h-3zM629 837h3v1h-3zM725 213h3v1h-3zM725 226h3v1h-3zM725 239h3v1h-3zM725 252h3v1h-3zM725 278h3v1h-3zM725 291h3v1h-3zM725 304h3v1h-3zM725 317h3v1h-3zM725 343h3v1h-3zM725 356h3v1h-3zM725 369h3v1h-3zM725 382h3v1h-3zM725 408h3v1h-3zM725 421h3v1h-3zM725 434h3v1h-3zM725 447h3v1h-3zM725 473h3v1h-3zM725 486h3v1h-3zM725 499h3v1h-3zM725 512h3v1h-3zM725 538h3v1h-3zM725 551h3v1h-3zM725 564h3v1h-3zM725 577h3v1h-3zM725 603h3v1h-3zM725 616h3v1h-3zM725 629h3v1h-3zM725 642h3v1h-3zM725 668h3v1h-3zM725 681h3v1h-3zM725 694h3v1h-3zM725 707h3v1h-3zM725 733h3v1h-3zM725 746h3v1h-3zM725 759h3v1h-3zM725 772h3v1h-3zM725 798h3v1h-3zM725 811h3v1h-3zM725 824h3v1h-3zM725 837h3v1h-3zM821 213h3v1h-3zM821 226h3v1h-3zM821 239h3v1h-3zM821 252h3v1h-3zM821 278h3v1h-3zM821 291h3v1h-3zM821 304h3v1h-3zM821 317h3v1h-3zM821 343h3v1h-3zM821 356h3v1h-3zM821 369h3v1h-3zM821 382h3v1h-3zM821 408h3v1h-3zM821 421h3v1h-3zM821 434h3v1h-3zM821 447h3v1h-3zM821 473h3v1h-3zM821 486h3v1h-3zM821 499h3v1h-3zM821 512h3v1h-3zM821 538h3v1h-3zM821 551h3v1h-3zM821 564h3v1h-3zM821 577h3v1h-3zM821 603h3v1h-3zM821 616h3v1h-3zM821 629h3v1h-3zM821 642h3v1h-3zM821 668h3v1h-3zM821 681h3v1h-3zM821 694h3v1h-3zM821 707h3v1h-3zM821 733h3v1h-3zM821 746h3v1h-3zM821 759h3v1h-3zM821 772h3v1h-3zM821 798h3v1h-3zM821 811h3v1h-3zM821 824h3v1h-3zM821 837h3v1h-3zM917 213h3v1h-3zM917 226h3v1h-3zM917 239h3v1h-3zM917 252h3v1h-3zM917 278h3v1h-3zM917 291h3v1h-3zM917 304h3v1h-3zM917 317h3v1h-3zM917 343h3v1h-3zM917 356h3v1h-3zM917 369h3v1h-3zM917 382h3v1h-3zM917 408h3v1h-3zM917 421h3v1h-3zM917 434h3v1h-3zM917 447h3v1h-3zM917 473h3v1h-3zM917 486h3v1h-3zM917 499h3v1h-3zM917 512h3v1h-3zM917 538h3v1h-3zM917 551h3v1h-3zM917 564h3v1h-3zM917 577h3v1h-3zM917 603h3v1h-3zM917 616h3v1h-3zM917 629h3v1h-3zM917 642h3v1h-3zM917 668h3v1h-3zM917 681h3v1h-3zM917 694h3v1h-3zM917 707h3v1h-3zM917 733h3v1h-3zM917 746h3v1h-3zM917 759h3v1h-3zM917 772h3v1h-3zM917 798h3v1h-3zM917 811h3v1h-3zM917 824h3v1h-3zM917 837h3v1h-3zM149 265h3v1h-3zM150 264h1v3h-1zM149 330h3v1h-3zM150 329h1v3h-1zM149 395h3v1h-3zM150 394h1v3h-1zM149 460h3v1h-3zM150 459h1v3h-1zM148 525h5v1h-5zM150 523h1v5h-1zM149 590h3v1h-3zM150 589h1v3h-1zM149 655h3v1h-3zM150 654h1v3h-1zM149 720h3v1h-3zM150 719h1v3h-1zM149 785h3v1h-3zM150 784h1v3h-1zM245 265h3v1h-3zM246 264h1v3h-1zM245 330h3v1h-3zM246 329h1v3h-1zM245 395h3v1h-3zM246 394h1v3h-1zM245 460h3v1h-3zM246 459h1v3h-1zM244 525h5v1h-5zM246 523h1v5h-1zM245 590h3v1h-3zM246 589h1v3h-1zM245 655h3v1h-3zM246 654h1v3h-1zM245 720h3v1h-3zM246 719h1v3h-1zM245 785h3v1h-3zM246 784h1v3h-1zM341 265h3v1h-3zM342 264h1v3h-1zM341 330h3v1h-3zM342 329h1v3h-1zM341 395h3v1h-3zM342 394h1v3h-1zM341 460h3v1h-3zM342 459h1v3h-1zM340 525h5v1h-5zM342 523h1v5h-1zM341 590h3v1h-3zM342 589h1v3h-1zM341 655h3v1h-3zM342 654h1v3h-1zM341 720h3v1h-3zM342 719h1v3h-1zM341 785h3v1h-3zM342 784h1v3h-1zM437 265h3v1h-3zM438 264h1v3h-1zM437 330h3v1h-3zM438 329h1v3h-1zM437 395h3v1h-3zM438 394h1v3h-1zM437 460h3v1h-3zM438 459h1v3h-1zM436 525h5v1h-5zM438 523h1v5h-1zM437 590h3v1h-3zM438 589h1v3h-1zM437 655h3v1h-3zM438 654h1v3h-1zM437 720h3v1h-3zM438 719h1v3h-1zM437 785h3v1h-3zM438 784h1v3h-1zM532 265h5v1h-5zM534 263h1v5h-1zM532 330h5v1h-5zM534 328h1v5h-1zM532 395h5v1h-5zM534 393h1v5h-1zM532 460h5v1h-5zM534 458h1v5h-1zM532 525h5v1h-5zM534 523h1v5h-1zM532 590h5v1h-5zM534 588h1v5h-1zM532 655h5v1h-5zM534 653h1v5h-1zM532 720h5v1h-5zM534 718h1v5h-1zM532 785h5v1h-5zM534 783h1v5h-1zM629 265h3v1h-3zM630 264h1v3h-1zM629 330h3v1h-3zM630 329h1v3h-1zM629 395h3v1h-3zM630 394h1v3h-1zM629 460h3v1h-3zM630 459h1v3h-1zM628 525h5v1h-5zM630 523h1v5h-1zM629 590h3v1h-3zM630 589h1v3h-1zM629 655h3v1h-3zM630 654h1v3h-1zM629 720h3v1h-3zM630 719h1v3h-1zM629 785h3v1h-3zM630 784h1v3h-1zM725 265h3v1h-3zM726 264h1v3h-1zM725 330h3v1h-3zM726 329h1v3h-1zM725 395h3v1h-3zM726 394h1v3h-1zM725 460h3v1h-3zM726 459h1v3h-1zM724 525h5v1h-5zM726 523h1v5h-1zM725 590h3v1h-3zM726 589h1v3h-1zM725 655h3v1h-3zM726 654h1v3h-1zM725 720h3v1h-3zM726 719h1v3h-1zM725 785h3v1h-3zM726 784h1v3h-1zM821 265h3v1h-3zM822 264h1v3h-1zM821 330h3v1h-3zM822 329h1v3h-1zM821 395h3v1h-3zM822 394h1v3h-1zM821 460h3v1h-3zM822 459h1v3h-1zM820 525h5v1h-5zM822 523h1v5h-1zM821 590h3v1h-3zM822 589h1v3h-1zM821 655h3v1h-3zM822 654h1v3h-1zM821 720h3v1h-3zM822 719h1v3h-1zM821 785h3v1h-3zM822 784h1v3h-1zM917 265h3v1h-3zM918 264h1v3h-1zM917 330h3v1h-3zM918 329h1v3h-1zM917 395h3v1h-3zM918 394h1v3h-1zM917 460h3v1h-3zM918 459h1v3h-1zM916 525h5v1h-5zM918 523h1v5h-1zM917 590h3v1h-3zM918 589h1v3h-1zM917 655h3v1h-3zM918 654h1v3h-1zM917 720h3v1h-3zM918 719h1v3h-1zM917 785h3v1h-3zM918 784h1v3h-1z" fill="#28b897" shape-rendering="crispEdges"/>
<polyline points="54.0,432.5 64.5,432.5 64.5,439.0 64.5,405.0 65.2,405.0 65.2,371.5 97.5,371.5 98.3,375.2 99.0,381.0 100.4,384.8 103.3,386.4 106.8,390.2 110.9,395.2 112.1,401.0 113.9,413.9 115.0,424.5 115.7,430.5 119.2,430.5 120.2,431.5 122.2,431.5 123.2,430.5 124.7,430.5 126.7,431.5 143.9,431.5 144.5,432.5 164.2,432.5 165.0,431.5 165.8,432.5 179.0,432.5 179.4,432.5 179.8,426.8 180.7,413.9 181.4,389.0 182.2,388.0 182.2,371.5 212.9,371.5 213.7,375.2 214.4,381.0 215.8,384.8 218.7,386.4 222.2,390.2 226.3,395.2 227.5,401.0 229.3,413.9 230.4,424.5 231.1,430.5 236.2,430.5 237.2,431.5 239.2,431.5 240.2,430.5 241.7,430.5 243.7,431.5 260.9,431.5 261.5,432.5 281.2,432.5 282.0,431.5 282.8,432.5 294.4,432.5 294.8,432.5 295.2,426.8 296.1,413.9 296.8,389.0 297.6,388.0 297.6,371.5 328.4,371.5 329.2,375.2 329.9,381.0 331.3,384.8 334.2,386.4 337.7,390.2 341.8,395.2 343.0,401.0 344.8,413.9 345.9,424.5 346.6,430.5 351.6,430.5 352.6,431.5 354.6,431.5 355.6,430.5 357.1,430.5 359.1,431.5 376.3,431.5 376.9,432.5 396.6,432.5 397.4,431.5 398.2,432.5 410.2,432.5 410.6,432.5 411.0,426.8 411.9,413.9 412.6,389.0 413.4,388.0 413.4,371.5 443.9,371.5 444.7,375.2 445.4,381.0 446.8,384.8 449.7,386.4 453.2,390.2 457.3,395.2 458.5,401.0 460.3,413.9 461.4,424.5 462.1,430.5 467.4,430.5 468.4,431.5 470.4,431.5 471.4,430.5 472.9,430.5 474.9,431.5 492.1,431.5 492.7,432.5 512.4,432.5 513.2,431.5 514.0,432.5 525.4,432.5 525.8,432.5 526.2,426.8 527.1,413.9 527.8,389.0 528.6,388.0 528.6,371.5 559.5,371.5 560.3,375.2 561.0,381.0 562.4,384.8 565.3,386.4 568.8,390.2 572.9,395.2 574.1,401.0 575.9,413.9 577.0,424.5 577.7,430.5 582.6,430.5 583.6,431.5 585.6,431.5 586.6,430.5 588.1,430.5 590.1,431.5 607.3,431.5 607.9,432.5 627.6,432.5 628.4,431.5 629.2,432.5 641.2,432.5 641.6,432.5 642.0,426.8 642.9,413.9 643.6,389.0 644.4,388.0 644.4,371.5 675.7,371.5 676.5,375.2 677.2,381.0 678.6,384.8 681.5,386.4 685.0,390.2 689.1,395.2 690.3,401.0 692.1,413.9 693.2,424.5 693.9,430.5 698.4,430.5 699.4,431.5 701.4,431.5 702.4,430.5 703.9,430.5 705.9,431.5 723.1,431.5 723.7,432.5 743.4,432.5 744.2,431.5 745.0,432.5 757.2,432.5 757.6,432.5 758.0,426.8 758.9,413.9 759.6,389.0 760.4,388.0 760.4,371.5 791.2,371.5 792.0,375.2 792.7,381.0 794.1,384.8 797.0,386.4 800.5,390.2 804.6,395.2 805.8,401.0 807.6,413.9 808.7,424.5 809.4,430.5 814.4,430.5 815.4,431.5 817.4,431.5 818.4,430.5 819.9,430.5 821.9,431.5 839.1,431.5 839.7,432.5 859.4,432.5 860.2,431.5 861.0,432.5 873.6,432.5 874.0,432.5 874.4,426.8 875.3,413.9 876.0,389.0 876.8,388.0 876.8,371.5 906.8,371.5 907.6,375.2 908.3,381.0 909.7,384.8 912.6,386.4 916.1,390.2 920.2,395.2 921.4,401.0 923.2,413.9 924.3,424.5 925.0,430.5 930.8,430.5 931.8,431.5 933.8,431.5 934.8,430.5 936.3,430.5 938.3,431.5 955.5,431.5 956.1,432.5 975.8,432.5 976.6,431.5 977.4,432.5 988.2,432.5 988.6,432.5 989.0,426.8 989.9,413.9 990.6,389.0 991.4,388.0 991.4,371.5 1010.0,371.5" fill="none" stroke="#00ffff" stroke-width="1.15" shape-rendering="crispEdges"/>
<polyline points="54.1,479.3 55.9,488.0 57.0,501.0 57.6,510.5 61.1,510.5 64.0,511.5 64.6,513.5 65.2,511.5 73.4,512.5 94.5,512.5 95.5,513.5 101.0,513.5 102.0,512.5 104.0,513.5 106.0,512.5 108.0,513.5 110.0,512.5 112.0,513.5 121.3,513.5 122.4,513.5 122.7,491.6 123.6,490.4 123.6,464.6 124.5,463.4 124.5,457.5 155.3,457.5 157.0,461.7 158.8,465.8 162.9,468.7 165.8,473.4 169.3,478.7 171.2,484.0 172.3,496.2 173.2,506.8 173.4,511.5 174.8,510.5 176.0,511.5 187.1,511.5 188.0,510.5 190.0,512.5 204.5,512.5 212.5,512.5 213.5,513.5 219.5,513.5 220.5,512.5 222.5,513.5 224.5,512.5 226.5,513.5 228.5,512.5 229.5,513.5 236.6,513.5 237.7,513.5 238.0,491.6 238.9,490.4 238.9,464.6 239.8,463.4 239.8,457.5 271.2,457.5 272.9,461.7 274.7,465.8 278.8,468.7 281.7,473.4 285.2,478.7 287.0,484.0 288.2,496.2 289.0,506.8 289.3,511.5 290.1,510.5 291.3,511.5 302.4,511.5 303.3,510.5 305.3,512.5 319.8,512.5 327.8,512.5 328.8,513.5 334.8,513.5 335.8,512.5 337.8,513.5 339.8,512.5 341.8,513.5 343.8,512.5 344.8,513.5 352.8,513.5 353.9,513.5 354.2,491.6 355.1,490.4 355.1,464.6 356.0,463.4 356.0,457.5 387.4,457.5 389.1,461.7 390.9,465.8 395.0,468.7 397.9,473.4 401.4,478.7 403.2,484.0 404.4,496.2 405.2,506.8 405.5,511.5 406.3,510.5 407.5,511.5 418.6,511.5 419.5,510.5 421.5,512.5 436.0,512.5 444.0,512.5 445.0,513.5 451.0,513.5 452.0,512.5 454.0,513.5 456.0,512.5 458.0,513.5 460.0,512.5 461.0,513.5 468.4,513.5 469.5,513.5 469.8,491.6 470.7,490.4 470.7,464.6 471.6,463.4 471.6,457.5 502.5,457.5 504.2,461.7 506.0,465.8 510.1,468.7 513.0,473.4 516.5,478.7 518.2,484.0 519.5,496.2 520.2,506.8 520.6,511.5 521.9,510.5 523.1,511.5 534.2,511.5 535.1,510.5 537.1,512.5 551.6,512.5 559.6,512.5 560.6,513.5 566.6,513.5 567.6,512.5 569.6,513.5 571.6,512.5 573.6,513.5 575.6,512.5 576.6,513.5 584.2,513.5 585.3,513.5 585.6,491.6 586.5,490.4 586.5,464.6 587.4,463.4 587.4,457.5 617.9,457.5 619.6,461.7 621.4,465.8 625.5,468.7 628.4,473.4 631.9,478.7 633.6,484.0 634.9,496.2 635.6,506.8 636.0,511.5 637.7,510.5 638.9,511.5 650.0,511.5 650.9,510.5 652.9,512.5 667.4,512.5 675.4,512.5 676.4,513.5 682.4,513.5 683.4,512.5 685.4,513.5 687.4,512.5 689.4,513.5 691.4,512.5 692.4,513.5 699.8,513.5 700.9,513.5 701.2,491.6 702.1,490.4 702.1,464.6 703.0,463.4 703.0,457.5 733.6,457.5 735.4,461.7 737.1,465.8 741.2,468.7 744.1,473.4 747.6,478.7 749.4,484.0 750.6,496.2 751.4,506.8 751.8,511.5 753.3,510.5 754.5,511.5 765.6,511.5 766.5,510.5 768.5,512.5 783.0,512.5 791.0,512.5 792.0,513.5 798.0,513.5 799.0,512.5 801.0,513.5 803.0,512.5 805.0,513.5 807.0,512.5 808.0,513.5 814.2,513.5 816.2,513.5 816.2,532.0 816.2,494.0 815.3,513.5 815.6,491.6 816.5,490.4 816.5,464.6 817.4,463.4 817.4,457.5 848.9,457.5 850.6,461.7 852.4,465.8 856.5,468.7 859.4,473.4 862.9,478.7 864.7,484.0 865.9,496.2 866.7,506.8 867.0,511.5 867.7,510.5 868.9,511.5 880.0,511.5 880.9,510.5 882.9,512.5 897.4,512.5 905.4,512.5 906.4,513.5 912.4,513.5 913.4,512.5 915.4,513.5 917.4,512.5 919.4,513.5 921.4,512.5 922.4,513.5 930.4,513.5 931.5,513.5 931.8,491.6 932.7,490.4 932.7,464.6 933.6,463.4 933.6,457.5 965.5,457.5 967.2,461.7 969.0,465.8 973.1,468.7 976.0,473.4 979.5,478.7 981.2,484.0 982.5,496.2 983.2,506.8 983.6,511.5 983.9,510.5 985.1,511.5 996.2,511.5 997.1,510.5 999.1,512.5 1010.0,512.5" fill="none" stroke="#ffff00" stroke-width="1.15" shape-rendering="crispEdges"/>
<path d="M579.0 184H592.0V197.5L585.5 201L579.0 197.5Z" fill="#ffff00"/><path d="M581.5 186.5H589.5M585.5 186.5V199" stroke="#33332a" stroke-width="1" fill="none"/>
<path d="M22 442.0H47L55.5 450.5L47 459.0H22Z" fill="#00ffff"/><text transform="translate(23.60 454.0) scale(0.8377 1)" fill="#3a4a4a" font-size="12" xml:space="preserve">CH2</text>
<path d="M22 522.0H47L55.5 530.5L47 539.0H22Z" fill="#ffff00"/><text transform="translate(23.60 534.0) scale(0.8377 1)" fill="#3a4a4a" font-size="12" xml:space="preserve">CH1</text>
<path d="M1016 537.5L1019 531H1033V544H1019Z" fill="#ffff00"/>
<path d="M1018.5 537.5H1030.5M1030.5 533V542" stroke="#33332a" stroke-width="1" fill="none"/>
<text transform="translate(13.75 122) scale(0.9249 1)" fill="#ffff00" font-size="15" xml:space="preserve">Run</text>
<text transform="translate(928.10 122) scale(0.8833 1)" fill="#ffff00" font-size="15" xml:space="preserve">Auto</text>
<path d="M964 123H969V111H973" stroke="#ffff00" stroke-width="2" fill="none" stroke-linejoin="miter"/><path d="M964.6 119L968.8 114.6L972.8 119" stroke="#ffff00" stroke-width="1.8" fill="none"/>
<text transform="translate(980.75 122) scale(0.8148 1)" fill="#ffff00" font-size="15" xml:space="preserve">CH1</text>
<text transform="translate(1010.60 122) scale(0.9096 1)" fill="#ffff00" font-size="15" xml:space="preserve">3.281</text>
<text transform="translate(1046.00 122) scale(0.8148 1)" fill="#ffff00" font-size="15" xml:space="preserve">V</text>
<rect x="12.5" y="863.5" width="119" height="55" fill="none" stroke="#1f9b88" stroke-width="1" shape-rendering="crispEdges"/><rect x="16" y="867" width="112" height="48" fill="#2c3031" shape-rendering="crispEdges"/>
<rect x="137.5" y="863.5" width="119" height="55" fill="none" stroke="#1f9b88" stroke-width="1" shape-rendering="crispEdges"/><rect x="141" y="867" width="112" height="48" fill="#2c3031" shape-rendering="crispEdges"/>
<rect x="936.5" y="863.5" width="119" height="55" fill="none" stroke="#1f9b88" stroke-width="1" shape-rendering="crispEdges"/><rect x="940" y="867" width="112" height="48" fill="#2c3031" shape-rendering="crispEdges"/>
<rect x="12.5" y="927.5" width="1043" height="39" fill="none" stroke="#1f9b88" stroke-width="1" shape-rendering="crispEdges"/><rect x="16" y="929" width="1036" height="34" fill="#2c3031" shape-rendering="crispEdges"/>
<text transform="translate(16.25 880) scale(0.8254 1)" fill="#ffff00" font-size="15" xml:space="preserve">CH1</text>
<text transform="translate(128.02 880) scale(0.9346 1)" fill="#ffff00" font-size="15" text-anchor="end" xml:space="preserve">X1  DC</text>
<text transform="translate(128.00 896) scale(0.8859 1)" fill="#ffff00" font-size="15" text-anchor="end" xml:space="preserve">5 V/div</text>
<text transform="translate(127.97 912) scale(0.9238 1)" fill="#ffff00" font-size="15" text-anchor="end" xml:space="preserve">-384.62 mV</text>
<text transform="translate(141.25 880) scale(0.8254 1)" fill="#00ffff" font-size="15" xml:space="preserve">CH2</text>
<text transform="translate(252.62 880) scale(0.9346 1)" fill="#00ffff" font-size="15" text-anchor="end" xml:space="preserve">X1  DC</text>
<text transform="translate(252.60 896) scale(0.8859 1)" fill="#00ffff" font-size="15" text-anchor="end" xml:space="preserve">5 V/div</text>
<text transform="translate(252.59 912) scale(0.9119 1)" fill="#00ffff" font-size="15" text-anchor="end" xml:space="preserve">5.77 V</text>
<text transform="translate(940.60 880) scale(0.9060 1)" fill="#ffff00" font-size="15" xml:space="preserve">Time</text>
<text transform="translate(1052.00 896) scale(0.9400 1)" fill="#ffff00" font-size="15" text-anchor="end" xml:space="preserve">20 us/div</text>
<text transform="translate(940.60 912) scale(0.8489 1)" fill="#ffff00" font-size="15" xml:space="preserve">509KB</text>
<text transform="translate(1052.02 912) scale(0.9481 1)" fill="#ffff00" font-size="15" text-anchor="end" xml:space="preserve">4 MSa/s</text>
<text transform="translate(16.25 944) scale(0.9192 1)" fill="#ffff00" font-size="15" xml:space="preserve">Vmin= 1.221 V</text>
<text transform="translate(160.50 944) scale(0.9062 1)" fill="#ffff00" font-size="15" xml:space="preserve">Vmax= ****</text>
<text transform="translate(304.50 944) scale(0.9078 1)" fill="#ffff00" font-size="15" xml:space="preserve">Vpp= ****</text>
<text transform="translate(448.00 944) scale(0.9265 1)" fill="#ffff00" font-size="15" xml:space="preserve">F= 41.237 KHz</text>
<text transform="translate(16.25 960) scale(0.9192 1)" fill="#00ffff" font-size="15" xml:space="preserve">Vmin= 1.172 V</text>
<text transform="translate(160.50 960) scale(0.9062 1)" fill="#00ffff" font-size="15" xml:space="preserve">Vmax= ****</text>
<text transform="translate(304.50 960) scale(0.9078 1)" fill="#00ffff" font-size="15" xml:space="preserve">Vpp= ****</text>
<text transform="translate(448.00 960) scale(0.9265 1)" fill="#00ffff" font-size="15" xml:space="preserve">F= 41.237 KHz</text>
</svg>
<div style="left:920px;top:10px;width:275px;height:67px;background:linear-gradient(#e9e9eb 36%,#d3d4d7 65%,#c1c2c6);border:1px solid #d9b77e;box-sizing:border-box;"></div>
<div style="left:921px;top:11px;width:273px;height:23px;background:linear-gradient(#eeeef0,#dedee1 45%,#c0c1c5);"></div>
<div style="left:921px;top:34px;width:39px;height:42px;background:#fff;"></div>
<svg style="position:absolute;left:925px;top:14px" width="16" height="16" viewBox="0 0 20 20"><rect x="0" y="0" width="20" height="20" rx="2.5" fill="url(#ig)"/><path d="M2 6L3.500 11L5 7.500L6.500 11L8 6" stroke="#fff" stroke-width="1.2" fill="none"/><path d="M9 3H12M9 3V6M10 9L13 12M13 9L10 12M11 14H14V17H11Z M13 2L15 5" stroke="#fff" stroke-width="1" fill="none"/></svg>
<span class="t" style="left:945.80px;top:16px;font-size:11px;line-height:13px;color:#3b3b5e;transform:scaleX(1.0138);transform-origin:0 0;">Multi VirAnalyzer(3.10.6.1)</span>
<div style="left:1160px;top:15px;width:15px;height:15px;border:1px solid #d9b77e;box-sizing:border-box;background:linear-gradient(#eee,#ddd);"></div>
<div style="left:1176px;top:15px;width:15px;height:15px;border:1px solid #d9b77e;box-sizing:border-box;background:linear-gradient(#eee,#ddd);"></div>
<svg style="position:absolute;left:1160px;top:15px" width="15" height="15"><path d="M3.500 5.500H11.500L7.500 10.500Z" fill="#333"/></svg>
<svg style="position:absolute;left:1176px;top:15px" width="15" height="15"><path d="M4 4L11 11M11 4L4 11" stroke="#333" stroke-width="1.400"/></svg>
<svg style="position:absolute;left:924.3px;top:39px" width="31" height="31.500" viewBox="0 0 32 32" preserveAspectRatio="none"><rect x="0" y="0" width="32" height="32" rx="3.5" fill="url(#ig2)"/><path d="M4 25C5 16 8 6.5 10.5 6.5C13.5 6.5 14 15 15.5 24C16.5 19 17.5 16.5 19 16.5C20.800 16.5 21.300 20 22 24C22.800 21 23.800 20 25 20C26.500 20 27.500 22.5 28.200 25" stroke="#fff" stroke-width="2.4" fill="none" stroke-linecap="round" stroke-linejoin="round"/><path d="M28 5C25 4 22 5 22.5 7C23 9 28 8 28 10.2C28 12 24 12.4 21.5 11.2" stroke="#fff" stroke-width="1.3" fill="none" transform="skewX(-15) translate(2.5 0)"/></svg>
<svg style="position:absolute;left:963.8px;top:39px" width="31" height="31.500" viewBox="0 0 32 32" preserveAspectRatio="none"><rect x="0" y="0" width="32" height="32" rx="3.5" fill="url(#ig2)"/><path d="M4 25C5 16 8 6.5 10.5 6.5C13.5 6.5 14 15 15.5 24C16.5 19 17.5 16.5 19 16.5C20.800 16.5 21.300 20 22 24C22.800 21 23.800 20 25 20C26.500 20 27.500 22.5 28.200 25" stroke="#fff" stroke-width="2.4" fill="none" stroke-linecap="round" stroke-linejoin="round"/><path d="M23.5 12.5L25 4.5C28 3.5 30 4.5 29.5 6.2C29 8 26 8.6 23 7.6" stroke="#fff" stroke-width="1.3" fill="none"/></svg>
<svg style="position:absolute;left:1002.8px;top:39px" width="31" height="31.500" viewBox="0 0 32 32" preserveAspectRatio="none"><rect x="0" y="0" width="32" height="32" rx="3.5" fill="url(#ig2)"/><ellipse cx="9.2" cy="16.5" rx="6.3" ry="5" fill="#fff" transform="rotate(20 9.2 16.5)"/><circle cx="7.6" cy="15" r="2.700" fill="#1c1c1c"/><path d="M5.800 15H9.400M7.600 13.200V16.800" stroke="#fff" stroke-width="1"/><circle cx="12.200" cy="19" r="1" fill="#1c1c1c"/><path d="M12.500 22C15.500 24.500 17 20 18 13.500C18.700 8.500 20 6.800 21.500 7.500C23.500 8.500 22.500 16 21.500 20.500C21 23 20 24 19 23.500M21.800 8C23.500 8.500 25.500 11.500 27 15.500" stroke="#fff" stroke-width="2.300" fill="none" stroke-linecap="round" stroke-linejoin="round"/></svg>
<svg style="position:absolute;left:1041.6px;top:39px" width="31" height="31.500" viewBox="0 0 32 32" preserveAspectRatio="none"><rect x="0" y="0" width="32" height="32" rx="3.5" fill="url(#ig2)"/><path d="M3.5 22H9V13.5H14.5V22H19V9.5H25V22H28.5" stroke="#fff" stroke-width="2.4" fill="none" stroke-linejoin="miter"/></svg>
<svg style="position:absolute;left:1082.6px;top:39px" width="31" height="31.500" viewBox="0 0 32 32" preserveAspectRatio="none"><rect x="0" y="0" width="32" height="32" rx="3.5" fill="url(#ig2)"/><ellipse cx="8.3" cy="16.5" rx="2.6" ry="5.6" fill="#fff"/><ellipse cx="24" cy="16.5" rx="2.6" ry="5.6" fill="#fff"/><path d="M10.500 19.500C11.500 24.500 12.700 23 13.700 15.500C14.400 9.500 15.800 7.500 16.800 12.500C17.800 17.500 18.600 25 19.800 23C20.800 21 20.800 13.500 22 12.500" stroke="#fff" stroke-width="2.300" fill="none" stroke-linecap="round"/></svg>
<svg style="position:absolute;left:1122px;top:39px" width="31" height="31.500" viewBox="0 0 32 32" preserveAspectRatio="none"><rect x="0" y="0" width="32" height="32" rx="3.5" fill="url(#ig2)"/><path d="M3.5 11C5 8.5 6 8.5 6.8 10.5C7.8 6.500 10.5 5.500 12.2 8C14.5 11.500 14.5 20 16.500 25.500C17 20.500 18 18.5 19.400 18.500C21 18.5 21.600 21.500 22.5 24.500C23.200 22 24 21 25 21C26.500 21 27.200 23.500 28.200 26" stroke="#fff" stroke-width="2.300" fill="none" stroke-linecap="round" stroke-linejoin="round"/></svg>
<svg style="position:absolute;left:1159px;top:39px" width="31" height="31.500" viewBox="0 0 32 32" preserveAspectRatio="none"><rect x="0" y="0" width="32" height="32" rx="3.5" fill="url(#ig2)"/><path d="M3.5 21.5C8.500 21.500 9.500 19.500 10.5 14.500C11.300 10.500 12 9.500 13.500 9.500H18.500C20 9.500 20.700 10.500 21.500 14.500C22.500 19.500 23.500 21.500 28.500 21.500" stroke="#fff" stroke-width="2.2" fill="none" stroke-linecap="round"/></svg>
<svg style="position:absolute;left:356px;top:595px" width="14" height="21" viewBox="0 0 14 21"><path d="M1 1V17L4.800 13.500L7.500 19.500L10 18.400L7.300 12.500H12.300Z" fill="#fff" stroke="#000" stroke-width="1"/></svg>
</body></html>
